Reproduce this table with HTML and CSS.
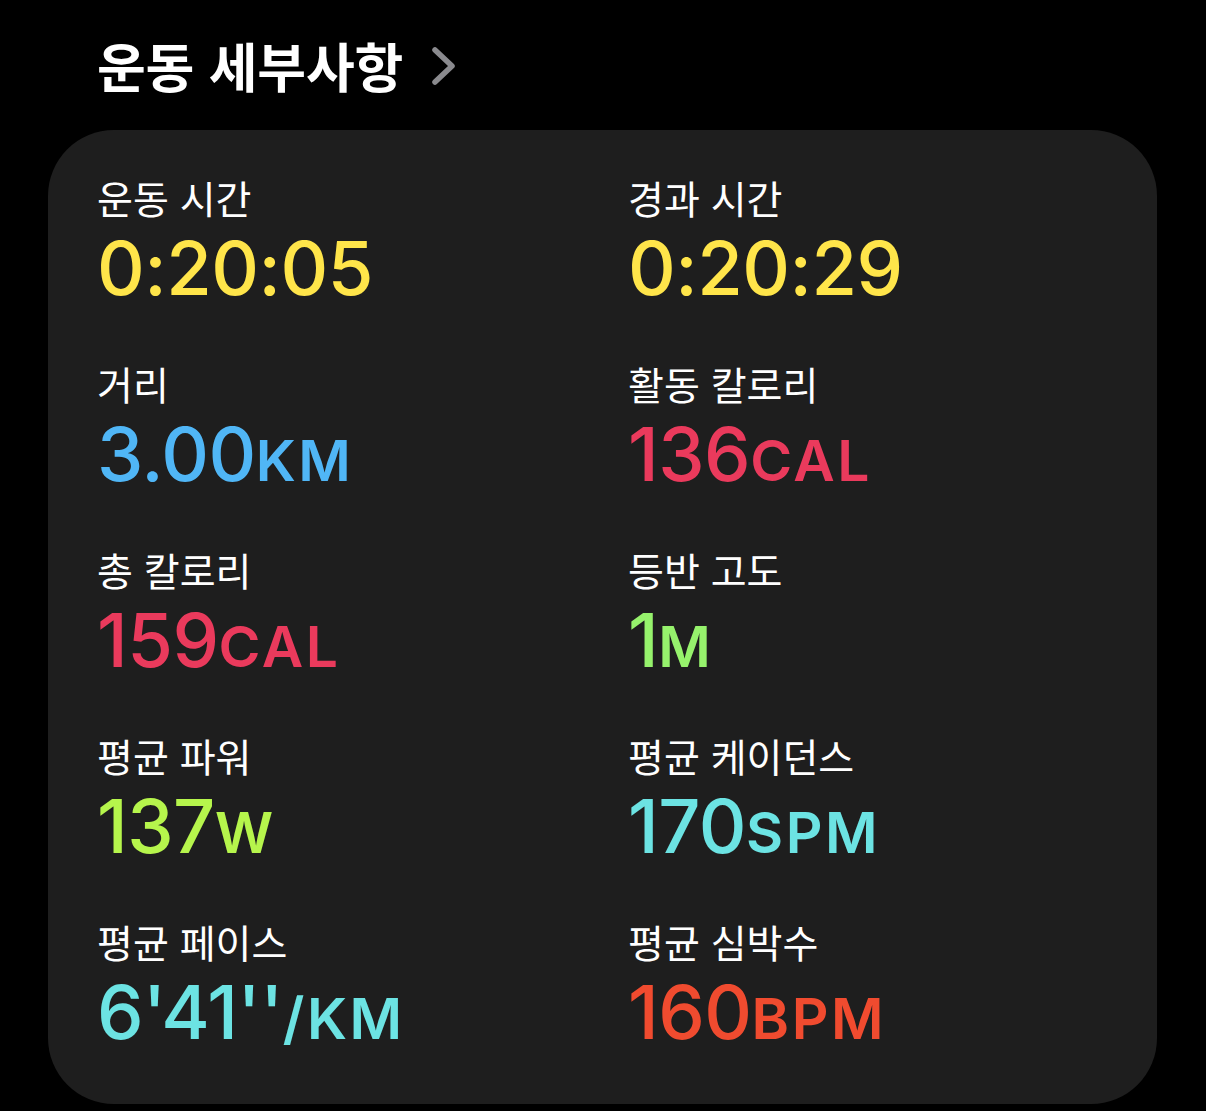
FILE: index.html
```html
<!DOCTYPE html>
<html lang="ko"><head>
<meta charset="UTF-8">
<meta name="viewport" content="width=device-width, initial-scale=1.0">
<title>운동 세부사항</title>
<link rel="stylesheet" href="styles.css">
</head>
<body>

<header class="head">
	<h1 class="title">운동 세부사항</h1>
	<svg class="chev" width="26" height="40" viewBox="0 0 26 40"><polyline points="4,4 21,20 4,36" fill="none" stroke="#8a8a8e" stroke-width="5.5" stroke-linecap="round" stroke-linejoin="round"/></svg>
</header>

<section class="card">
	<div class="item"><div class="lbl">운동 시간</div><div class="val yellow">0:20:05</div></div>
	<div class="item"><div class="lbl">경과 시간</div><div class="val yellow">0:20:29</div></div>

	<div class="item"><div class="lbl">거리</div><div class="val blue">3.00<span class="unit">KM</span></div></div>
	<div class="item"><div class="lbl">활동 칼로리</div><div class="val red">136<span class="unit">CAL</span></div></div>

	<div class="item"><div class="lbl">총 칼로리</div><div class="val red">159<span class="unit">CAL</span></div></div>
	<div class="item"><div class="lbl">등반 고도</div><div class="val green">1<span class="unit">M</span></div></div>

	<div class="item"><div class="lbl">평균 파워</div><div class="val lime">137<span class="unit">W</span></div></div>
	<div class="item"><div class="lbl">평균 케이던스</div><div class="val cyan">170<span class="unit">SPM</span></div></div>

	<div class="item"><div class="lbl">평균 페이스</div><div class="val cyan">6'41''<span class="unit">/KM</span></div></div>
	<div class="item"><div class="lbl">평균 심박수</div><div class="val orange">160<span class="unit">BPM</span></div></div>
</section>

</body>
</html>
```
FILE: styles.css
```css
body {
	margin: 0;
	background: #000;
	font-family: 'Inter', 'Noto Sans CJK KR', sans-serif;
	color: #fff;}

.head {
	display: flex;
	align-items: center;
	gap: 28px;
	height: 130px;
	padding-left: 97px;
	box-sizing: border-box;}

.title {
	margin: 0;
	font: normal 700 53px/1 'Noto Sans CJK KR', sans-serif;
	letter-spacing: -0.2px;}

.chev {margin-top: 2px;}

.card {
	margin: 0 49px 0 48px;
	height: 974px;
	box-sizing: border-box;
	padding: 44px 0 0 49px;
	background: #1e1e1e;
	border-radius: 66px;
	display: grid;
	grid-template-columns: 531px 1fr;
	grid-auto-rows: 186px;}

.lbl {
	font: normal 400 39px/46px 'Noto Sans CJK KR', sans-serif;
	color: #fff;}

.val {
	font: normal 500 74px/62px 'Inter', sans-serif;
	letter-spacing: -0.5px;
	margin-top: 17px;}

.unit {
	font-size: 57px;
	font-weight: 600;
	letter-spacing: 2.5px;}

.yellow {color: #ffe54a;}
.blue   {color: #50b6f6;}
.red    {color: #ea3a5c;}
.green  {color: #96f26c;}
.lime   {color: #b6f54c;}
.cyan   {color: #6ce3e3;}
.orange {color: #f04b2f;}
```
